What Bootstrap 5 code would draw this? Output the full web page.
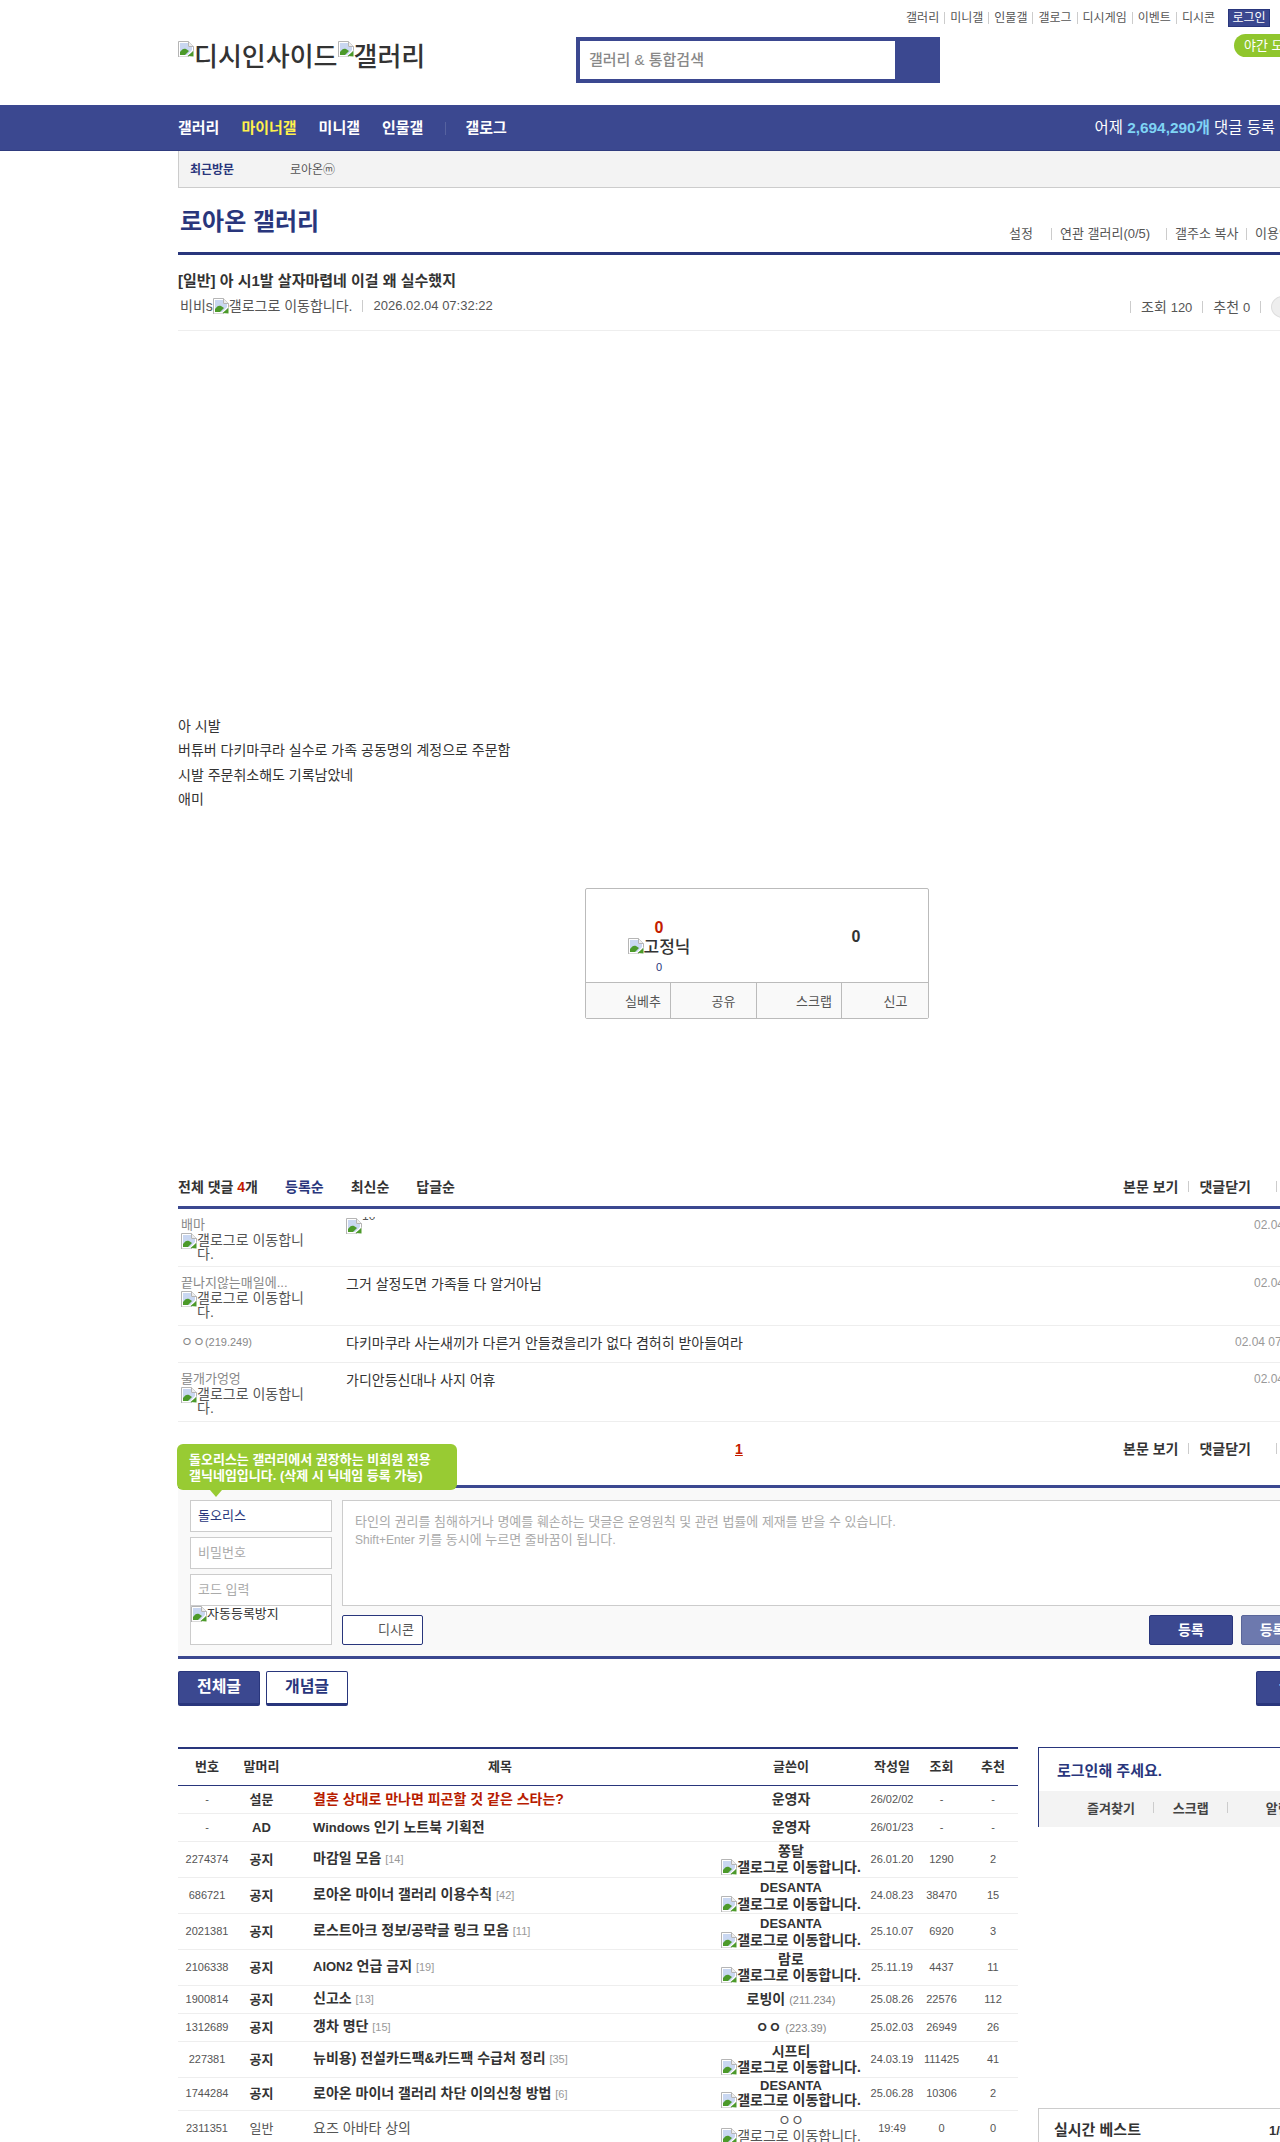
<!DOCTYPE html>
<html lang="ko">
<head>
<meta charset="utf-8">
<title>로아온 갤러리</title>
<link href="https://cdn.jsdelivr.net/npm/bootstrap@5.3.0/dist/css/bootstrap.min.css" rel="stylesheet">
<style>
body{font-family:"Liberation Sans","Noto Sans CJK KR",sans-serif;font-size:14px;color:#333;width:1280px;height:2142px;overflow:hidden;background:#fff;line-height:1.2}
a{color:inherit;text-decoration:none}
.bi-ico{width:16px;height:16px;flex:none;vertical-align:top;display:inline-block}
.svg-defs{height:0;width:0}
.wrap{width:1160px;margin-left:178px}
.lat{font-size:13px}
.sep-list>span+span{border-left:1px solid #ccc}
.top-links{height:37px;padding:9px 10px 0 0;font-size:12px;color:#555}
.top-links .sep-list{line-height:12px;margin-top:3px}
.top-links .sep-list span{padding:0 5px}
.login-btn{background:#3b4890;border:1px solid #29367c;color:#fff;width:42px;height:18px;line-height:16px;text-align:center;margin-left:8px;font-size:12px}
.head-row{height:68px}
.logo{width:398px;font-size:26px;font-weight:500;color:#333;height:46px;line-height:32px;margin-top:4px;white-space:nowrap;flex:none}
.search-box{width:364px;height:46px;background:#3b4890;padding:4px 45px 4px 4px;flex:none}
.search-in{background:#fff;height:38px;line-height:38px;padding-left:9px;color:#888;font-size:15px;font-weight:500}
.night{margin-left:294px;margin-top:-3px;background:#90c62d;color:#fff;height:23px;line-height:23px;border-radius:12px 0 0 12px;width:62px;padding-left:10px;font-size:13px;white-space:nowrap;overflow:hidden;flex:none}
.main-nav{background:#3b4890;height:46px;color:#fff;font-weight:700;font-size:15px;border-bottom:1px solid #2f3b7e}
.main-nav .wrap{height:45px;padding-top:1px}
.main-nav a{margin-right:22px}
.nav-gap{border-left:1px solid #56629f;height:13px;margin-right:19px}
.nav-hi{color:#fff04b}
.stat{font-weight:400;font-size:15.400px;margin-left:auto;margin-right:63px;white-space:nowrap;text-align:right}
.stat b{color:#7fd4f5}
.sub-nav{background:#f3f3f3;height:37px;border-left:1px solid #ccc;border-bottom:1px solid #ccc;font-size:12px;padding:2px 0 0 11px;color:#555}
.sub-nav b{color:#29367c;width:100px}
.gall-head{height:67px;border-bottom:3px solid #29367c;width:1160px}
.gall-title{font-size:24px;font-weight:700;color:#29367c;padding:19px 0 0 2px;line-height:30px}
.gall-links{margin-left:auto;font-size:13px;color:#555;padding-top:40px;white-space:nowrap;width:329px;align-items:flex-start}
.gall-links span{line-height:12px;height:12px;padding-left:8px;flex:none}
.gall-links span:nth-child(1){width:42px;padding-left:0}
.gall-links span:nth-child(2){width:115px}
.gall-links span:nth-child(3){width:80px}
.post-title{font-size:15px;font-weight:700;color:#333;padding-top:17px;line-height:17px}
.post-meta{height:42px;border-bottom:1px solid #eee;padding-top:9px;color:#555;font-size:14px;line-height:16px}
.post-meta .mini-sep{border-left:1px solid #ccc;height:12px;margin:2px 10px 0 10px}
.meta-name{margin-left:2px}
.meta-right{margin-left:auto;padding-top:1px;width:208px;margin-right:0}
.round{width:24px;height:22px;border-radius:50%;background:#eee;border:1px solid #ddd;margin-left:10px;margin-top:-3px}
.post-body{padding-top:383px;height:645px;font-size:14px;color:#333}
.post-body div{height:24.4px;line-height:24px}
.vote{width:344px;height:131px;margin-left:407px;border:1px solid #bbb;border-radius:2px;margin-top:-88px}
.vote-top{height:94px;border-bottom:1px solid #bbb;color:#333}
.vote-up{width:146px;padding-top:29px;text-align:center}
.vote-up .n{font-size:16px;font-weight:700;color:#c41c00;line-height:20px}
.vote-up .fix{font-size:17px;font-weight:500;line-height:20px;height:20px;white-space:nowrap;color:#333}
.vote-up .s{font-size:11px;color:#29367c;line-height:15px;margin-top:2px}
.vote-dn{margin-left:auto;width:124px;padding:36px 20px 0 0;text-align:center;font-size:16px;font-weight:700;line-height:24px}
.vote-bot{height:35px;background:#f9f9f9;font-size:13px;color:#555}
.vote-bot div{flex:1;line-height:37px;padding-left:39px;white-space:nowrap}
.vote-bot div:nth-child(2){padding-left:41px}
.vote-bot div:nth-child(4){padding-left:42px}
.vote-bot div+div{border-left:1px solid #bbb}
.cm-head{height:42px;margin-top:148px;border-bottom:3px solid #3b4890;font-size:14px;font-weight:700;color:#333;padding-top:12px;line-height:17px}
.cm-head .red{color:#c41c00}
.cm-head .sort{margin-left:27px}
.cm-head .sort.on{color:#29367c}
.ops{margin-left:auto;white-space:nowrap;width:215px}
.op-sep{border-left:1px solid #ccc;display:inline-block;height:11px;margin:0 10px}
.op-sep.far{margin-left:25px}
.cm-row{border-bottom:1px solid #eee;padding:9px 0 0 3px;color:#333}
.cm-name{width:165px;flex:none;color:#888;font-size:13px;line-height:14px}
.cm-name small{font-size:11px}
.cm-name .alt{display:flex;width:125px;color:#555;font-size:14px;line-height:14px;margin-top:1px}
.cm-text{font-size:14px;color:#333;line-height:16px}
.cm-date{margin-left:auto;color:#999;font-size:12px;white-space:nowrap;width:84px;line-height:14px}
.cm-date.wide{width:103px}
.cm-clip{font-size:12px;height:6px;overflow:hidden;display:block;margin-top:-1px;color:#555;line-height:14px}
.cm-clip span{display:block;margin-top:-8px}
.pager-row{height:66px;padding-top:19px;font-size:14px;font-weight:700;border-bottom:3px solid #3b4890;position:relative;line-height:17px;color:#333}
.pg-one{color:#c41c00;font-size:14px;text-decoration:underline;margin-left:557px}
.tip{position:absolute;left:-1px;top:22px;width:280px;height:46px;background:#98cb33;color:#fff;border-radius:6px;font-size:13px;line-height:16px;padding:8px 12px;z-index:3;white-space:nowrap}
.tip::after{content:"";position:absolute;left:33px;top:46px;border:6px solid transparent;border-top:7px solid #98cb33;border-bottom:0}
.form-box{background:#f9f9f9;border-bottom:3px solid #3b4890;padding:12px 0 0 12px;height:171px}
.f-left{width:142px;flex:none;margin-right:10px}
.f-in{height:32px;background:#fff;border:1px solid #ccc;line-height:30px;font-size:13px;color:#aaa;padding-left:7px;margin-bottom:5px}
.f-in.on{color:#29367c}
.f-cap{height:39px;background:#fff;border:1px solid #ccc;border-top:0;font-size:13px;color:#333;line-height:16px;margin-top:-5px;display:flex}
.f-ta{height:106px;background:#fff;border:1px solid #ccc;font-size:13px;line-height:18px;color:#aaa;padding:12px;width:1000px}
.f-ta .lat{font-size:12px}
.f-btns{margin-top:9px;height:31px;width:1000px}
.dc-btn{width:81px;height:30px;background:#fff;border:1px solid #29367c;border-radius:2px;text-align:right;padding-right:8px;line-height:28px;font-size:13px;color:#555;flex:none}
.reg{width:84px;height:30px;background:#3b4890;border:1px solid #29367c;border-radius:2px;color:#fff;text-align:center;line-height:28px;font-size:14px;font-weight:700;margin-left:726px;flex:none;white-space:nowrap}
.reg2{background:#6d79ae;border-color:#5a6699;margin-left:8px;width:97px}
.tabs-row{margin-top:12px;height:35px}
.tab-a{width:82px;height:35px;background:#3b4890;border:1px solid #29367c;border-bottom:3px solid #29367c;border-radius:2px;color:#fff;font-weight:700;font-size:16px;text-align:center;line-height:30px;flex:none;white-space:nowrap}
.tab-b{background:#fff;color:#29367c;margin-left:6px}
.tab-c{margin-left:908px;text-align:left;padding-left:22px}
.cols{margin-top:41px}
.list-side{width:840px;flex:none}
.list-tb{table-layout:fixed;width:840px;border-collapse:collapse;border-top:2px solid #29367c;color:#333}
.list-tb th{height:37px;font-size:13px;font-weight:700;text-align:center;border-bottom:1px solid #29367c;padding:0;color:#333}
.list-tb td{padding:0;text-align:center;font-size:11px;border-bottom:1px solid #eee;height:28px;line-height:15px;color:#555}
.list-tb tr.tall td{height:36px}
.list-tb td.sub{font-size:13px;font-weight:700;color:#333}
.list-tb td.ti{text-align:left;padding-left:26px;font-size:14px;font-weight:700;color:#333;white-space:nowrap}
.list-tb td.ti.hot{color:#b81c00}
.list-tb td.ti i{font-style:normal;font-weight:400;font-size:11px;color:#999}
.list-tb td.wr{font-size:14px;font-weight:700;color:#333;white-space:nowrap;line-height:16px}
.list-tb td.wr small{font-size:11px;font-weight:400;color:#888}
.list-tb td.wr .alt{display:flex;justify-content:center;line-height:16px}
.list-tb tr.short td{height:33px}
.list-tb tr.short td.wr{line-height:13px}
.list-tb tr.plain td.sub,.list-tb tr.plain td.ti,.list-tb tr.plain td.wr{font-weight:400;color:#555}
.side{margin-left:20px;width:302px;flex:none}
.login-card{height:80px;border:1px solid #29367c;border-right:0}
.login-t{height:43px;padding:14px 0 0 18px;font-size:15px;font-weight:700;color:#29367c;line-height:17px}
.login-b{height:36px;background:#f3f3f3;font-size:13px;font-weight:700;color:#444;line-height:36px;white-space:nowrap;padding-left:48px}
.login-b s{display:inline-block;text-decoration:none;border-left:1px solid #ccc;height:11px;margin:0 19px 0 18px}
.login-b em{font-style:normal;margin-left:19px}
.best{margin-top:281px;border:1px solid #ccc;height:60px;padding:12px 0 0 15px;font-size:15px;font-weight:700;color:#333;line-height:18px;border-right:0;white-space:nowrap}
.best span{margin-left:128px;font-size:13px}
</style>
</head>
<body>
<svg class="svg-defs d-block" aria-hidden="true"><defs><symbol id="brk" viewBox="0 0 16 16"><path d="M.5.5h10l5 5v4L10 16H.5z" fill="#fff" stroke="#b5b5b5"/><path d="M2 2h8v4h4v3l-5 5H2z" fill="#c9d7f1"/><path d="M2 14v-3c2-3 4-4 6-3l3 2-4 4z" fill="#4c9a2a"/><path d="M9.5 15 15.500 10v5.500z" fill="#4c9a2a"/><path d="M10.500.5v5h5" fill="#eee" stroke="#b5b5b5"/></symbol></defs></svg>

<header>
  <div class="top-links d-flex justify-content-end align-items-start">
    <div class="sep-list d-flex"><span>갤러리</span><span>미니갤</span><span>인물갤</span><span>갤로그</span><span>디시게임</span><span>이벤트</span><span>디시콘</span></div>
    <div class="login-btn">로그인</div>
  </div>
  <div class="wrap head-row d-flex align-items-start">
    <div class="logo"><svg class="bi-ico"><use href="#brk"/></svg>디시인사이드<svg class="bi-ico"><use href="#brk"/></svg>갤러리</div>
    <div class="search-box"><div class="search-in">갤러리 &amp; 통합검색</div></div>
    <div class="night">야간 모드</div>
  </div>
  <nav class="main-nav">
    <div class="wrap d-flex align-items-center">
      <a href="#">갤러리</a><a href="#" class="nav-hi">마이너갤</a><a href="#">미니갤</a><a href="#">인물갤</a><span class="nav-gap"></span><a href="#">갤로그</a>
      <div class="stat">어제 <b>2,694,290개</b> 댓글 등록</div>
    </div>
  </nav>
</header>

<main class="wrap">
  <div class="sub-nav d-flex align-items-center"><b>최근방문</b><span>로아온ⓜ</span></div>
  <div class="gall-head d-flex">
    <div class="gall-title">로아온 갤러리</div>
    <div class="gall-links d-flex sep-list"><span>설정</span><span>연관 갤러리(0/5)</span><span>갤주소 복사</span><span>이용안내</span></div>
  </div>
  <div class="post-title">[일반] 아 시1발 살자마렵네 이걸 왜 실수했지</div>
  <div class="post-meta d-flex">
    <span class="meta-name">비비s</span><svg class="bi-ico"><use href="#brk"/></svg><span>갤로그로 이동합니다.</span><span class="mini-sep"></span><span class="lat">2026.02.04 07:32:22</span>
    <div class="meta-right d-flex"><span class="mini-sep ms-0"></span><span>조회 <span class="lat">120</span></span><span class="mini-sep"></span><span>추천 <span class="lat">0</span></span><span class="mini-sep me-0"></span><span class="round"></span></div>
  </div>
  <div class="post-body">
    <div>아 시발</div><div>버튜버 다키마쿠라 실수로 가족 공동명의 계정으로 주문함</div><div>시발 주문취소해도 기록남았네</div><div>애미</div>
  </div>
  <div class="vote">
    <div class="vote-top d-flex">
      <div class="vote-up"><div class="n">0</div><div class="fix"><svg class="bi-ico"><use href="#brk"/></svg>고정닉</div><div class="s">0</div></div>
      <div class="vote-dn">0</div>
    </div>
    <div class="vote-bot d-flex"><div>실베추</div><div>공유</div><div>스크랩</div><div>신고</div></div>
  </div>

  <div class="cm-head d-flex">
    <span>전체 댓글 <span class="red">4</span>개</span><span class="sort on">등록순</span><span class="sort">최신순</span><span class="sort">답글순</span>
    <span class="ops">본문 보기<span class="op-sep"></span>댓글닫기<span class="op-sep far"></span></span>
  </div>
  <div class="cm-row d-flex" style="height:58px">
    <div class="cm-name">배마<div class="alt"><svg class="bi-ico"><use href="#brk"/></svg><span>갤로그로 이동합니다.</span></div></div>
    <div class="cm-text d-flex"><svg class="bi-ico"><use href="#brk"/></svg><span class="cm-clip"><span>10</span></span></div>
    <div class="cm-date">02.04 07:33:14</div>
  </div>
  <div class="cm-row d-flex" style="height:59px">
    <div class="cm-name">끝나지않는매일에...<div class="alt"><svg class="bi-ico"><use href="#brk"/></svg><span>갤로그로 이동합니다.</span></div></div>
    <div class="cm-text">그거 살정도면 가족들 다 알거아님</div>
    <div class="cm-date">02.04 07:36:02</div>
  </div>
  <div class="cm-row d-flex" style="height:37px">
    <div class="cm-name">ㅇㅇ<small>(219.249)</small></div>
    <div class="cm-text">다키마쿠라 사는새끼가 다른거 안들켰을리가 없다 겸허히 받아들여라</div>
    <div class="cm-date wide">02.04 07:41:51</div>
  </div>
  <div class="cm-row d-flex" style="height:59px">
    <div class="cm-name">물개가엉엉<div class="alt"><svg class="bi-ico"><use href="#brk"/></svg><span>갤로그로 이동합니다.</span></div></div>
    <div class="cm-text">가디안등신대나 사지 어휴</div>
    <div class="cm-date">02.04 07:45:30</div>
  </div>

  <div class="pager-row d-flex">
    <div class="tip">돌오리스는 갤러리에서 권장하는 비회원 전용<br>갤닉네임입니다. (삭제 시 닉네임 등록 가능)</div>
    <span class="pg-one">1</span>
    <span class="ops">본문 보기<span class="op-sep"></span>댓글닫기<span class="op-sep far"></span></span>
  </div>
  <div class="form-box d-flex">
    <div class="f-left">
      <div class="f-in on">돌오리스</div><div class="f-in">비밀번호</div><div class="f-in">코드 입력</div>
      <div class="f-cap"><svg class="bi-ico"><use href="#brk"/></svg>자동등록방지</div>
    </div>
    <div class="flex-grow-1">
      <div class="f-ta">타인의 권리를 침해하거나 명예를 훼손하는 댓글은 운영원칙 및 관련 법률에 제재를 받을 수 있습니다.<br><span class="lat">Shift+Enter</span> 키를 동시에 누르면 줄바꿈이 됩니다.</div>
      <div class="f-btns d-flex"><div class="dc-btn">디시콘</div><div class="reg">등록</div><div class="reg reg2">등록+추천</div></div>
    </div>
  </div>
  <div class="tabs-row d-flex">
    <div class="tab-a">전체글</div><div class="tab-a tab-b">개념글</div><div class="tab-a tab-c">글쓰기</div>
  </div>

  <div class="cols d-flex align-items-start">
    <div class="list-side">
      <table class="list-tb">
        <colgroup><col style="width:58px"><col style="width:51px"><col style="width:426px"><col style="width:156px"><col style="width:46px"><col style="width:53px"><col style="width:50px"></colgroup>
        <thead><tr><th>번호</th><th>말머리</th><th>제목</th><th>글쓴이</th><th>작성일</th><th>조회</th><th>추천</th></tr></thead>
        <tbody>
          <tr><td>-</td><td class="sub">설문</td><td class="ti hot">결혼 상대로 만나면 피곤할 것 같은 스타는?</td><td class="wr">운영자</td><td>26/02/02</td><td>-</td><td>-</td></tr>
          <tr><td>-</td><td class="sub">AD</td><td class="ti"><span class="lat">Windows</span> 인기 노트북 기획전</td><td class="wr">운영자</td><td>26/01/23</td><td>-</td><td>-</td></tr>
          <tr class="tall"><td>2274374</td><td class="sub">공지</td><td class="ti">마감일 모음 <i>[14]</i></td><td class="wr">쫑달<div class="alt"><svg class="bi-ico"><use href="#brk"/></svg>갤로그로 이동합니다.</div></td><td>26.01.20</td><td>1290</td><td>2</td></tr>
          <tr class="tall"><td>686721</td><td class="sub">공지</td><td class="ti">로아온 마이너 갤러리 이용수칙 <i>[42]</i></td><td class="wr"><span class="lat">DESANTA</span><div class="alt"><svg class="bi-ico"><use href="#brk"/></svg>갤로그로 이동합니다.</div></td><td>24.08.23</td><td>38470</td><td>15</td></tr>
          <tr class="tall"><td>2021381</td><td class="sub">공지</td><td class="ti">로스트아크 정보/공략글 링크 모음 <i>[11]</i></td><td class="wr"><span class="lat">DESANTA</span><div class="alt"><svg class="bi-ico"><use href="#brk"/></svg>갤로그로 이동합니다.</div></td><td>25.10.07</td><td>6920</td><td>3</td></tr>
          <tr class="tall"><td>2106338</td><td class="sub">공지</td><td class="ti"><span class="lat">AION2</span> 언급 금지 <i>[19]</i></td><td class="wr">람로<div class="alt"><svg class="bi-ico"><use href="#brk"/></svg>갤로그로 이동합니다.</div></td><td>25.11.19</td><td>4437</td><td>11</td></tr>
          <tr><td>1900814</td><td class="sub">공지</td><td class="ti">신고소 <i>[13]</i></td><td class="wr">로빙이 <small>(211.234)</small></td><td>25.08.26</td><td>22576</td><td>112</td></tr>
          <tr><td>1312689</td><td class="sub">공지</td><td class="ti">갱차 명단 <i>[15]</i></td><td class="wr">ㅇㅇ <small>(223.39)</small></td><td>25.02.03</td><td>26949</td><td>26</td></tr>
          <tr class="tall"><td>227381</td><td class="sub">공지</td><td class="ti">뉴비용) 전설카드팩&amp;카드팩 수급처 정리 <i>[35]</i></td><td class="wr">시프티<div class="alt"><svg class="bi-ico"><use href="#brk"/></svg>갤로그로 이동합니다.</div></td><td>24.03.19</td><td>111425</td><td>41</td></tr>
          <tr class="tall short"><td>1744284</td><td class="sub">공지</td><td class="ti">로아온 마이너 갤러리 차단 이의신청 방법 <i>[6]</i></td><td class="wr"><span class="lat">DESANTA</span><div class="alt"><svg class="bi-ico"><use href="#brk"/></svg>갤로그로 이동합니다.</div></td><td>25.06.28</td><td>10306</td><td>2</td></tr>
          <tr class="tall plain"><td>2311351</td><td class="sub">일반</td><td class="ti">요즈 아바타 상의</td><td class="wr">ㅇㅇ<div class="alt"><svg class="bi-ico"><use href="#brk"/></svg>갤로그로 이동합니다.</div></td><td>19:49</td><td>0</td><td>0</td></tr>
        </tbody>
      </table>
    </div>
    <aside class="side">
      <div class="login-card">
        <div class="login-t">로그인해 주세요.</div>
        <div class="login-b">즐겨찾기<s></s>스크랩<s></s><em>알림</em></div>
      </div>
      <div class="best">실시간 베스트<span>1/4</span></div>
    </aside>
  </div>
</main>
</body>
</html>
